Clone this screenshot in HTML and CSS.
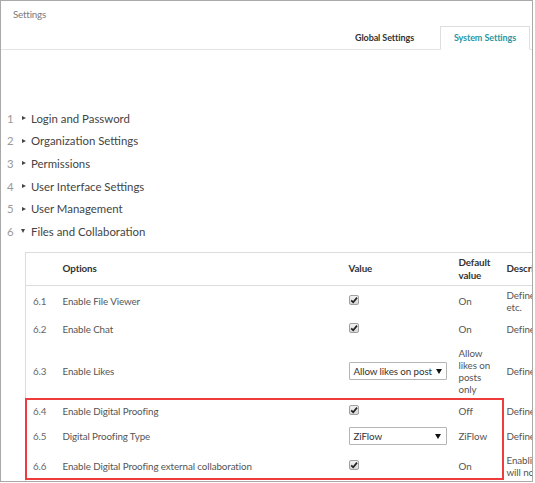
FILE: index.html
```html
<!DOCTYPE html>
<html>
<head>
<meta charset="utf-8">
<link rel="stylesheet" href="styles.css">
</head>
<body>
<div class="frame">
  <div class="title">Settings</div>
  <div class="tabs">
    <div class="tab">Global Settings</div>
    <div class="tab active">System Settings</div>
  </div>
  <ol class="sections">
    <li class="sec"><span class="num">1</span><span class="tri right"></span><span class="label">Login and Password</span></li>
    <li class="sec"><span class="num">2</span><span class="tri right"></span><span class="label">Organization Settings</span></li>
    <li class="sec"><span class="num">3</span><span class="tri right"></span><span class="label">Permissions</span></li>
    <li class="sec"><span class="num">4</span><span class="tri right"></span><span class="label">User Interface Settings</span></li>
    <li class="sec"><span class="num">5</span><span class="tri right"></span><span class="label">User Management</span></li>
    <li class="sec"><span class="num">6</span><span class="tri down"></span><span class="label">Files and Collaboration</span></li>
  </ol>
  <div class="table-wrap">
    <table class="opts">
      <colgroup>
        <col class="c-num"><col class="c-opt"><col class="c-val"><col class="c-def"><col class="c-desc">
      </colgroup>
      <thead>
        <tr class="head">
          <th></th><th>Options</th><th>Value</th><th>Default value</th><th>Description</th>
        </tr>
      </thead>
      <tbody>
        <tr class="r1">
          <td class="n">6.1</td><td>Enable File Viewer</td>
          <td><span class="cb"><svg viewBox="0 0 10 10" width="10" height="10"><path d="M2.2 5.3 L4.2 7.3 L8 2.6" fill="none" stroke="#222" stroke-width="1.7"/></svg></span></td>
          <td>On</td><td>Defines<br>etc.</td>
        </tr>
        <tr class="r2">
          <td class="n">6.2</td><td>Enable Chat</td>
          <td><span class="cb"><svg viewBox="0 0 10 10" width="10" height="10"><path d="M2.2 5.3 L4.2 7.3 L8 2.6" fill="none" stroke="#222" stroke-width="1.7"/></svg></span></td>
          <td>On</td><td>Defines</td>
        </tr>
        <tr class="r3">
          <td class="n">6.3</td><td>Enable Likes</td>
          <td><span class="sel"><span>Allow likes on post</span><span class="arrow"></span></span></td>
          <td>Allow<br>likes on<br>posts<br>only</td><td>Defines</td>
        </tr>
        <tr class="r4">
          <td class="n">6.4</td><td>Enable Digital Proofing</td>
          <td><span class="cb"><svg viewBox="0 0 10 10" width="10" height="10"><path d="M2.2 5.3 L4.2 7.3 L8 2.6" fill="none" stroke="#222" stroke-width="1.7"/></svg></span></td>
          <td>Off</td><td>Defines</td>
        </tr>
        <tr class="r5">
          <td class="n">6.5</td><td>Digital Proofing Type</td>
          <td><span class="sel"><span>ZiFlow</span><span class="arrow"></span></span></td>
          <td>ZiFlow</td><td>Defines</td>
        </tr>
        <tr class="r6">
          <td class="n">6.6</td><td>Enable Digital Proofing external collaboration</td>
          <td><span class="cb"><svg viewBox="0 0 10 10" width="10" height="10"><path d="M2.2 5.3 L4.2 7.3 L8 2.6" fill="none" stroke="#222" stroke-width="1.7"/></svg></span></td>
          <td>On</td><td>Enabling<br>will not</td>
        </tr>
      </tbody>
    </table>
    <div class="highlight"></div>
  </div>
</div>
</body>
</html>
```

FILE: styles.css
```css
* { box-sizing: border-box; }
html, body { margin: 0; padding: 0; background: #fff; }
body { font-family: "Lato", "Noto Sans", sans-serif; color: #444; }

.frame {
  width: 533px;
  height: 482px;
  border: 1px solid #a9a9a9;
  overflow: hidden;
  position: relative;
  background: #fff;
}

.title {
  height: 25px;
  padding: 6px 0 0 12px;
  font-size: 9.8px;
  letter-spacing: -0.2px;
  line-height: 14px;
  color: #7a7a7a;
}

.tabs {
  display: flex;
  justify-content: flex-end;
  border-bottom: 1px solid #e4e4e4;
  height: 24px;
  padding-right: 2px;
}
.tab {
  font-size: 9px;
  font-weight: 700;
  letter-spacing: -0.1px;
  color: #333;
  line-height: 22px;
  padding: 0 12px;
  margin-right: 13px;
  border: 1px solid transparent;
  white-space: nowrap;
}
.tab.active {
  width: 90px;
  padding: 0;
  margin-right: 0;
  text-align: center;
  color: #2a97a6;
  border-color: #dedede;
  border-bottom-color: #fff;
  background: #fff;
  height: 24px;
  margin-bottom: -1px;
}

.sections {
  list-style: none;
  margin: 57px 0 0 0;
  padding: 0;
}
.sec {
  display: flex;
  align-items: center;
  height: 22.6px;
  font-size: 11.4px;
}
.num {
  width: 14px;
  padding-left: 6px;
  color: #999;
  font-size: 11.4px;
  box-sizing: content-box;
}
.tri {
  width: 10px;
  display: inline-flex;
  align-items: center;
}
.tri.right::before {
  content: "";
  border-left: 4px solid #444;
  border-top: 2.5px solid transparent;
  border-bottom: 2.5px solid transparent;
  margin-left: 1px;
}
.tri.down::before {
  content: "";
  border-top: 4px solid #444;
  border-left: 2.5px solid transparent;
  border-right: 2.5px solid transparent;
}
.label { color: #444; }

.table-wrap {
  position: relative;
  margin: 9px 0 0 24px;
  width: 700px;
}
.opts {
  border-collapse: collapse;
  table-layout: fixed;
  width: 700px;
  border-top: 1px solid #dcdcdc;
  border-left: 1px solid #dcdcdc;
  font-size: 9.8px;
  letter-spacing: -0.1px;
  color: #555;
}
.c-num { width: 30px; }
.c-opt { width: 286px; }
.c-val { width: 110px; }
.c-def { width: 48px; }
.c-desc { width: 226px; }

.opts th {
  text-align: left;
  font-weight: 700;
  color: #333;
  font-size: 9.8px;
  line-height: 13px;
  padding: 3px 2px 3px 7px;
  vertical-align: middle;
  height: 33px;
  border-bottom: 1px solid #dcdcdc;
}
.opts td {
  padding: 2px 2px 2px 7px;
  line-height: 12px;
  vertical-align: middle;
  white-space: nowrap;
}
.opts td.n { color: #666; }

.r1 td { height: 31px; }
.r2 td { height: 26px; }
.r3 td { height: 58px; }
.r4 td { height: 22px; }
.r5 td { height: 28px; }
.r6 td { height: 32px; }

.cb {
  display: inline-block;
  width: 10px;
  height: 10px;
  border: 1px solid #a0a0a0;
  border-radius: 2px;
  background: linear-gradient(#f2f2f2, #d8d8d8);
  vertical-align: middle;
  position: relative;
  top: -2px;
}
.cb svg { display: block; position: absolute; left: -1px; top: -1px; }

.sel {
  display: flex;
  align-items: center;
  justify-content: space-between;
  width: 98px;
  height: 18px;
  border: 1px solid #b5b5b5;
  border-radius: 1px;
  padding: 0 5px 0 4px;
  font-size: 9.8px;
  color: #333;
  background: #fff;
  white-space: nowrap;
}
.arrow {
  flex: none;
  margin-left: 4px;
  border-top: 5px solid #111;
  border-left: 3px solid transparent;
  border-right: 3px solid transparent;
}

.highlight {
  position: absolute;
  left: 0;
  top: 146px;
  width: 479px;
  height: 82px;
  border: 2px solid #ee3b3b;
  pointer-events: none;
}
```
